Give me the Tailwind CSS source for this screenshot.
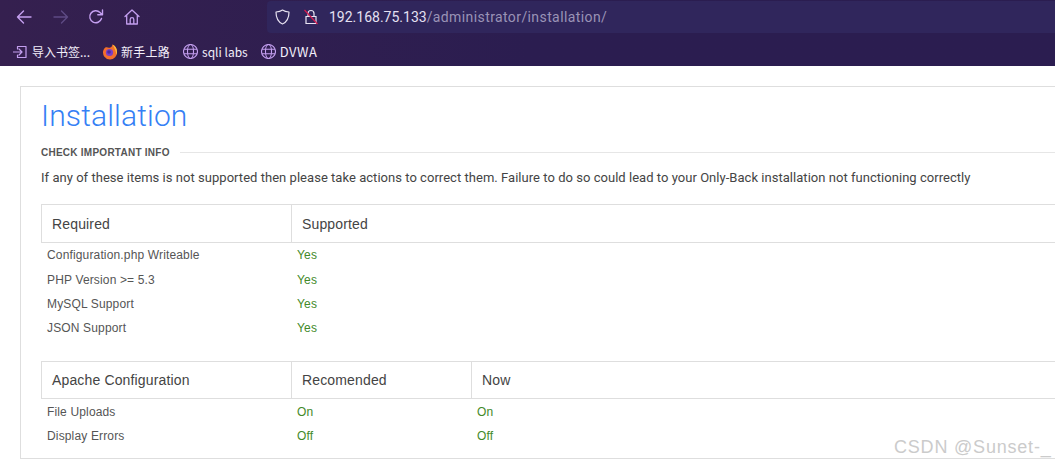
<!DOCTYPE html>
<html><head><meta charset="utf-8"><script src="https://cdn.jsdelivr.net/npm/@tailwindcss/browser@4"></script></head>
<body class="m-0 bg-white overflow-hidden font-['Liberation_Sans',sans-serif]">
<div class="relative w-[1055px] h-[463px] overflow-hidden">
  <header class="h-[66px] bg-[#2b1d50] bg-gradient-to-r from-[#35204f] via-[#2b1d50] to-[#2b1d50]">
    <div class="h-[33px] flex items-center relative">
      <div class="flex items-center pl-[16px] gap-[19px] text-[#c9a7ef]">
        <svg class="w-[16px] h-[16px]" viewBox="0 0 16 16" fill="none" stroke="#c49ff0" stroke-width="1.4" stroke-linecap="round" stroke-linejoin="round"><path d="M15 8H1.500M7.500 2 1.500 8l6 6"/></svg>
        <svg class="w-[16px] h-[16px] ml-[2px]" viewBox="0 0 16 16" fill="none" stroke="#5e4a85" stroke-width="1.4" stroke-linecap="round" stroke-linejoin="round"><path d="M1 8h13.500M8.500 2l6 6-6 6"/></svg>
        <svg class="w-[16px] h-[16px]" viewBox="0 0 16 16" fill="none" stroke="#c49ff0" stroke-width="1.4" stroke-linecap="round" stroke-linejoin="round"><path d="M13.500 9.500A6 6 0 1 1 12 3.500l2 2M14.500 1v4.700H9.800"/></svg>
        <svg class="w-[16px] h-[16px] ml-[1px]" viewBox="0 0 16 16" fill="none" stroke="#c49ff0" stroke-width="1.3" stroke-linecap="round" stroke-linejoin="round"><path d="M1 7.500 8 1l7 6.500M2.700 6.200V15h10.600V6.200M6.200 15v-4.500a1.800 1.800 0 0 1 3.600 0V15"/></svg>
      </div>
      <div class="absolute left-[267px] top-[1px] w-[788px] h-[32px] rounded-tl-[4px] rounded-bl-[4px] bg-[#30265c] flex items-center">
        <svg class="ml-[8px] w-[15px] h-[16px]" viewBox="0 0 15 16" fill="none" stroke="#e6e1f0" stroke-width="1.2" stroke-linejoin="round"><path d="M7.500 1C5.500 2.400 3.400 2.800 1 3c0 5 .8 9.400 6.500 12C13.200 12.400 14 8 14 3c-2.400-.2-4.500-.6-6.500-2Z"/></svg>
        <svg class="ml-[14px] w-[14px] h-[16px]" viewBox="0 0 14 16" fill="none" stroke-width="1.2"><path d="M4 7V4.500a3 3 0 0 1 6 0V7M2 7.500h10v7H2Z" stroke="#e8e3f2"/><path d="M0.500 1 13.500 15" stroke="#d81b4f"/></svg>
        <span class="ml-[11px] text-[14px] font-['Roboto',sans-serif] text-[#e4e0f2]">192.168.75.133<span class="text-[#9a93b6] tracking-[0.4px]">/administrator/installation/</span></span>
      </div>
    </div>
    <div class="h-[33px] pt-[4px] flex items-center pl-[13px] text-[12px] text-[#f2eefa] font-['Noto_Sans_CJK_SC','Roboto',sans-serif]">
      <svg class="w-[14px] h-[14px]" viewBox="0 0 14 14" fill="none" stroke="#c49ff0" stroke-width="1.2" stroke-linecap="round" stroke-linejoin="round"><path d="M0.500 7H9M6 4l3 3-3 3M4.500 4V1.500h8.500v11H4.500V10"/></svg>
      <span class="ml-[5px]">导入书签...</span>
      <svg class="ml-[12px] w-[16px] h-[16px]" viewBox="0 0 16 16"><path d="M8 15.500A7 7 0 0 1 1.300 6.500C2 4.500 3 3.500 4 3.300 5 3 6 3.500 7 3.800 8.500 4 10 3.300 10.500.6c3 1.500 4.500 4 4.500 7.400a7 7 0 0 1-7 7.500Z" fill="#f36e2c"/><path d="M10.500.6c3 1.500 4.500 4 4.500 7.400 0 1-.2 2-.6 2.800C14 7 12.500 4 10.500.6Z" fill="#fdbc3a"/><circle cx="7.500" cy="8.500" r="3.600" fill="#7b3ec6"/><circle cx="7" cy="8" r="1.800" fill="#4a2a9a"/></svg>
      <span class="ml-[3px] tracking-[0.25px]">新手上路</span>
      <svg class="ml-[13px] w-[15px] h-[15px]" viewBox="0 0 15 15" fill="none" stroke="#c49ff0" stroke-width="1.1"><circle cx="7.500" cy="7.500" r="7"/><ellipse cx="7.500" cy="7.500" rx="3" ry="7"/><path d="M1 5.200h13M1 9.800h13"/></svg>
      <span class="ml-[4px]">sqli labs</span>
      <svg class="ml-[13px] w-[15px] h-[15px]" viewBox="0 0 15 15" fill="none" stroke="#c49ff0" stroke-width="1.1"><circle cx="7.500" cy="7.500" r="7"/><ellipse cx="7.500" cy="7.500" rx="3" ry="7"/><path d="M1 5.200h13M1 9.800h13"/></svg>
      <span class="ml-[4px] text-[13px] tracking-[0.5px]">DVWA</span>
    </div>
  </header>
  <main class="pt-[20px] pl-[20px]">
    <section class="w-[1100px] h-[373px] border border-[#dedede] pl-[20px] pt-[9px]">
      <h1 class="text-[30px] leading-[40px] font-light text-[#3580f5] tracking-[0.15px] font-['Roboto',sans-serif]">Installation</h1>
      <div class="mt-[9px] flex items-center h-[14px]">
        <h2 class="text-[10px] font-bold text-[#555] uppercase tracking-[0.25px]">Check important info</h2>
        <div class="ml-[10px] flex-1 border-t border-[#e6e6e6]"></div>
      </div>
      <p class="mt-[10px] text-[13px] leading-[17px] tracking-[0.035px] text-[#444] font-['Roboto',sans-serif]">If any of these items is not supported then please take actions to correct them. Failure to do so could lead to your Only-Back installation not functioning correctly</p>
      <table class="mt-[18px] w-[1060px] table-fixed border-collapse text-[12px] tracking-[0.15px] text-[#555]">
        <colgroup><col class="w-[250px]"><col></colgroup>
        <thead><tr class="h-[38px] text-[14px] text-left text-[#444] font-normal">
          <th class="font-normal pl-[10px] pt-[2px] border border-[#dedede]">Required</th>
          <th class="font-normal pl-[10px] pt-[2px] border border-[#dedede]">Supported</th>
        </tr></thead>
        <tbody>
          <tr class="h-[25px]"><td class="pl-[5.5px]">Configuration.php Writeable</td><td class="pl-[5.5px] text-[#438a28]">Yes</td></tr>
          <tr class="h-[24px]"><td class="pl-[5.5px]">PHP Version &gt;= 5.3</td><td class="pl-[5.5px] text-[#438a28]">Yes</td></tr>
          <tr class="h-[24px]"><td class="pl-[5.5px]">MySQL Support</td><td class="pl-[5.5px] text-[#438a28]">Yes</td></tr>
          <tr class="h-[24px]"><td class="pl-[5.5px]">JSON Support</td><td class="pl-[5.5px] text-[#438a28]">Yes</td></tr>
        </tbody>
      </table>
      <table class="mt-[21px] w-[1060px] table-fixed border-collapse text-[12px] tracking-[0.15px] text-[#555]">
        <colgroup><col class="w-[250px]"><col class="w-[180px]"><col></colgroup>
        <thead><tr class="h-[37px] text-[14px] text-left text-[#444]">
          <th class="font-normal pl-[10px] pt-[2px] border border-[#dedede]">Apache Configuration</th>
          <th class="font-normal pl-[10px] pt-[2px] border border-[#dedede]">Recomended</th>
          <th class="font-normal pl-[10px] pt-[2px] border border-[#dedede]">Now</th>
        </tr></thead>
        <tbody>
          <tr class="h-[26px]"><td class="pl-[5.5px] pt-[2px]">File Uploads</td><td class="pl-[5.5px] pt-[2px] text-[#438a28]">On</td><td class="pl-[5.5px] pt-[2px] text-[#438a28]">On</td></tr>
          <tr class="h-[24px]"><td class="pl-[5.5px]">Display Errors</td><td class="pl-[5.5px] text-[#438a28]">Off</td><td class="pl-[5.5px] text-[#438a28]">Off</td></tr>
        </tbody>
      </table>
    </section>
  </main>
  <div class="absolute left-[894px] top-[437px] text-[18px] leading-[21px] text-[#cbcbcb] tracking-[0.8px] font-['Liberation_Sans',sans-serif]">CSDN @Sunset-_</div>
</div>
</body></html>
